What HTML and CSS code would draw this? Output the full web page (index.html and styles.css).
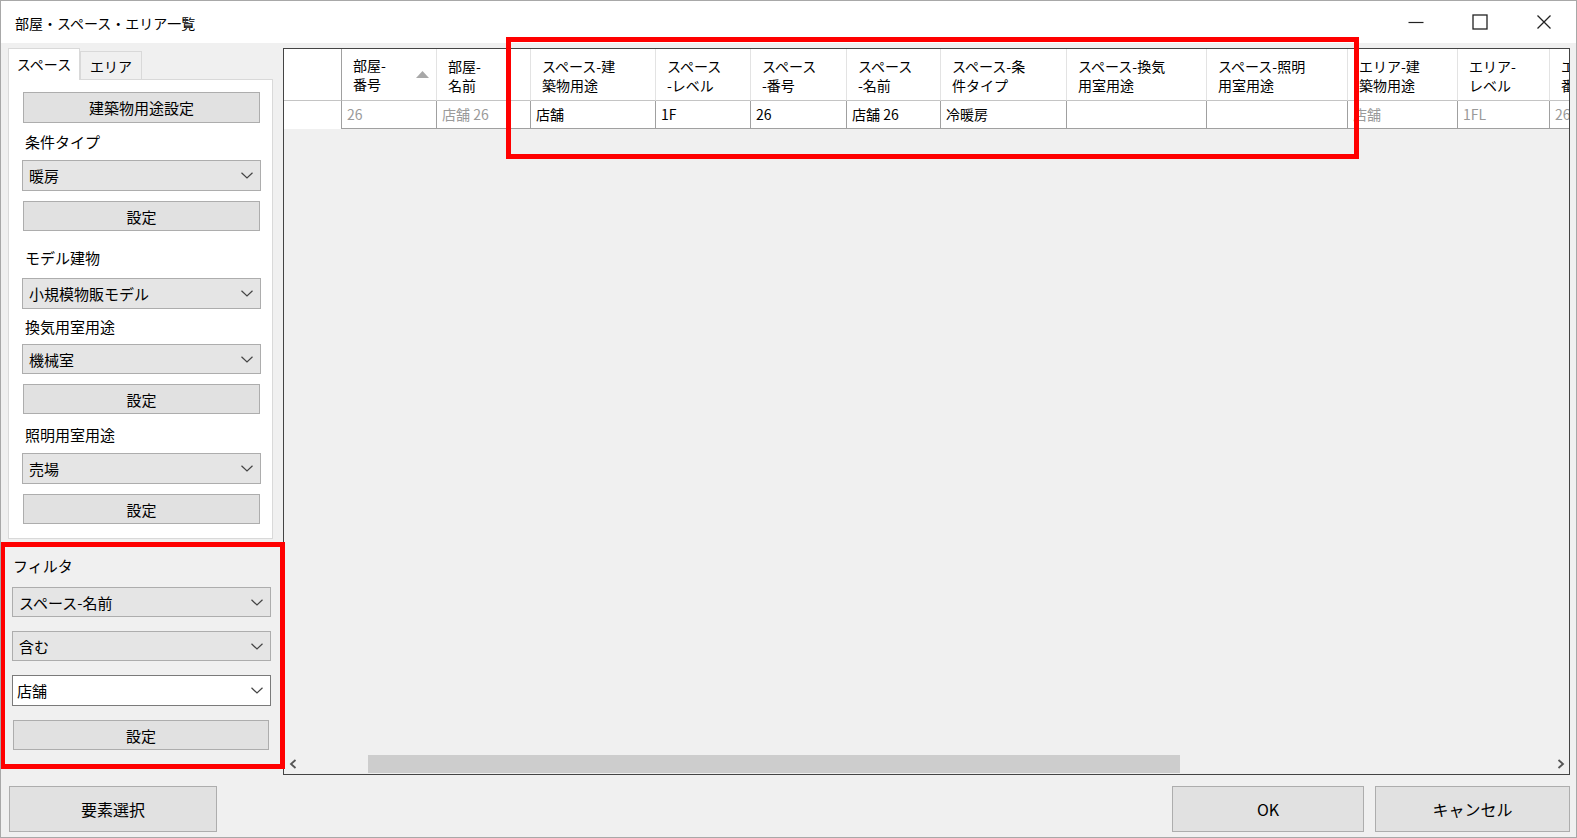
FILE: index.html
```html
<!DOCTYPE html>
<html lang="ja">
  <head>
    <meta charset="UTF-8" />
    <title>部屋・スペース・エリア一覧</title>
    <link rel="stylesheet" href="styles.css">
  </head>
  <body>
    <div class="window">
      <div class="titlebar">
        <div class="title">部屋・スペース・エリア一覧</div>
        <div class="controls">
          <div class="ctl">
            <svg width="16" height="16" viewBox="0 0 16 16"><line x1="0.5" y1="8.5" x2="15.5" y2="8.5" stroke="#222" stroke-width="1.2"/></svg>
          </div>
          <div class="ctl">
            <svg width="16" height="16" viewBox="0 0 16 16"><rect x="1" y="1" width="14" height="14" fill="none" stroke="#222" stroke-width="1.3"/></svg>
          </div>
          <div class="ctl">
            <svg width="16" height="16" viewBox="0 0 16 16"><path d="M1.5 1.5 L14.5 14.5 M14.5 1.5 L1.5 14.5" stroke="#222" stroke-width="1.3"/></svg>
          </div>
        </div>
      </div>

      <div class="content">
        <div class="left">
          <div class="tabs">
            <div class="tab-strip">
              <div class="tab active">スペース</div>
              <div class="tab">エリア</div>
            </div>
            <div class="tab-page">
              <div class="btn btn-top">建築物用途設定</div>
              <div class="label l1">条件タイプ</div>
              <div class="combo c1"><span>暖房</span><svg class="chev" width="12" height="7" viewBox="0 0 12 7"><polyline points="0.5,0.8 6,6 11.5,0.8" fill="none" stroke="#444" stroke-width="1.2"/></svg></div>
              <div class="btn b1">設定</div>
              <div class="label l2">モデル建物</div>
              <div class="combo c2"><span>小規模物販モデル</span><svg class="chev" width="12" height="7" viewBox="0 0 12 7"><polyline points="0.5,0.8 6,6 11.5,0.8" fill="none" stroke="#444" stroke-width="1.2"/></svg></div>
              <div class="label l3">換気用室用途</div>
              <div class="combo c3"><span>機械室</span><svg class="chev" width="12" height="7" viewBox="0 0 12 7"><polyline points="0.5,0.8 6,6 11.5,0.8" fill="none" stroke="#444" stroke-width="1.2"/></svg></div>
              <div class="btn b1">設定</div>
              <div class="label l4">照明用室用途</div>
              <div class="combo c4"><span>売場</span><svg class="chev" width="12" height="7" viewBox="0 0 12 7"><polyline points="0.5,0.8 6,6 11.5,0.8" fill="none" stroke="#444" stroke-width="1.2"/></svg></div>
              <div class="btn b1">設定</div>
            </div>
          </div>

          <div class="filter">
            <div class="label">フィルタ</div>
            <div class="combo f1"><span>スペース-名前</span><svg class="chev" width="12" height="7" viewBox="0 0 12 7"><polyline points="0.5,0.8 6,6 11.5,0.8" fill="none" stroke="#444" stroke-width="1.2"/></svg></div>
            <div class="combo f2"><span>含む</span><svg class="chev" width="12" height="7" viewBox="0 0 12 7"><polyline points="0.5,0.8 6,6 11.5,0.8" fill="none" stroke="#444" stroke-width="1.2"/></svg></div>
            <div class="combo f3 edit"><span>店舗</span><svg class="chev" width="12" height="7" viewBox="0 0 12 7"><polyline points="0.5,0.8 6,6 11.5,0.8" fill="none" stroke="#444" stroke-width="1.2"/></svg></div>
            <div class="btn f4">設定</div>
          </div>
        </div>

        <div class="grid">
          <div class="grid-view">
            <div class="row head">
              <div class="cell rh"></div>
              <div class="cell sorted"><span>部屋-<br>番号</span><svg width="13" height="7" viewBox="0 0 13 7"><polygon points="0,7 6.5,0 13,7" fill="#a8a8a8"/></svg></div>
              <div class="cell">部屋-<br>名前</div>
              <div class="cell">スペース-建<br>築物用途</div>
              <div class="cell">スペース<br>-レベル</div>
              <div class="cell">スペース<br>-番号</div>
              <div class="cell">スペース<br>-名前</div>
              <div class="cell">スペース-条<br>件タイプ</div>
              <div class="cell">スペース-換気<br>用室用途</div>
              <div class="cell">スペース-照明<br>用室用途</div>
              <div class="cell">エリア-建<br>築物用途</div>
              <div class="cell">エリア-<br>レベル</div>
              <div class="cell">エリア-<br>番号</div>
            </div>
            <div class="row data">
              <div class="cell rh"></div>
              <div class="cell ro">26</div>
              <div class="cell ro">店舗 26</div>
              <div class="cell">店舗</div>
              <div class="cell">1F</div>
              <div class="cell">26</div>
              <div class="cell">店舗 26</div>
              <div class="cell">冷暖房</div>
              <div class="cell"></div>
              <div class="cell"></div>
              <div class="cell ro">店舗</div>
              <div class="cell ro">1FL</div>
              <div class="cell ro">26</div>
            </div>
          </div>
          <div class="hscroll">
            <div class="arrow"><svg width="8" height="10" viewBox="0 0 8 10"><polyline points="6.5,1 2,5 6.5,9" fill="none" stroke="#555" stroke-width="1.8"/></svg></div>
            <div class="track"><div class="thumb"></div></div>
            <div class="arrow"><svg width="8" height="10" viewBox="0 0 8 10"><polyline points="1.5,1 6,5 1.5,9" fill="none" stroke="#555" stroke-width="1.8"/></svg></div>
          </div>
        </div>
      </div>

      <div class="footer">
        <div class="btn big select">要素選択</div>
        <div class="right-btns">
          <div class="btn big ok">OK</div>
          <div class="btn big cancel">キャンセル</div>
        </div>
      </div>

      <div class="mark mark-grid"></div>
      <div class="mark mark-filter"></div>
    </div>
  </body>
</html>
```

FILE: styles.css
```css
* {
  margin: 0;
  padding: 0;
  box-sizing: border-box;
}
body {
  font-family: "Noto Sans CJK JP", "Noto Sans", sans-serif;
  background-color: #f0f0f0;
  color: #000;
  overflow: hidden;
}
.window {
  position: relative;
  width: 1577px;
  height: 838px;
  border: 1px solid #a8a8a8;
  background-color: #f0f0f0;
  display: flex;
  flex-direction: column;
  overflow: hidden;
}
.titlebar {
  height: 42px;
  background-color: #fff;
  display: flex;
  align-items: center;
  justify-content: space-between;
  flex: none;
}
.title {
  font-size: 14px;
  padding-left: 14px;
  padding-top: 1px;
}
.controls {
  display: flex;
  height: 100%;
}
.ctl {
  width: 64px;
  height: 100%;
  display: flex;
  align-items: center;
  justify-content: center;
}

.content {
  display: flex;
  padding-top: 5px;
  height: 732px;
  flex: none;
}
.left {
  width: 282px;
  flex: none;
}
.tabs {
  margin-left: 7px;
  width: 265px;
}
.tab-strip {
  display: flex;
  align-items: flex-end;
  height: 31px;
}
.tab {
  height: 28px;
  width: 62px;
  border: 1px solid #d9d9d9;
  border-bottom: none;
  background-color: #f0f0f0;
  font-size: 14px;
  display: flex;
  align-items: center;
  justify-content: center;
  padding-top: 1px;
}
.tab.active {
  height: 32px;
  width: 72px;
  margin-bottom: -1px;
  background-color: #fff;
  position: relative;
  z-index: 1;
  padding-bottom: 3px;
}
.tab-page {
  height: 460px;
  border: 1px solid #d9d9d9;
  background-color: #fff;
  padding: 0 11px 0 13px;
}
.label {
  font-size: 15px;
  height: 22px;
  line-height: 22px;
  padding-left: 3px;
}
.btn {
  background-color: #e1e1e1;
  border: 1px solid #adadad;
  display: flex;
  align-items: center;
  justify-content: center;
  font-size: 15px;
}
.combo {
  background-color: #e5e5e5;
  border: 1px solid #adadad;
  height: 31px;
  display: flex;
  align-items: center;
  justify-content: space-between;
  padding: 0 7px 0 6px;
  font-size: 15px;
}
.combo.edit {
  background-color: #fff;
  border-color: #7a7a7a;
  padding-left: 4px;
}
.btn-top {
  margin: 12px 1px 0 1px;
  height: 31px;
}
.b1 {
  margin: 10px 1px 0 1px;
  height: 30px;
}
.l1 { margin-top: 8px; }
.c1 { margin-top: 7px; }
.l2 { margin-top: 16px; }
.c2 { margin-top: 9px; }
.l3 { margin-top: 7px; }
.c3 { margin-top: 6px; height: 30px; }
.l4 { margin-top: 10px; }
.c4 { margin-top: 7px; }

.filter {
  padding: 16px 0 0 11px;
}
.filter .label {
  padding-left: 1px;
}
.filter .combo {
  width: 259px;
  height: 30px;
}
.f1 { margin-top: 10px; }
.f2 { margin-top: 14px; }
.f3 { margin-top: 14px; height: 31px !important; }
.f4 {
  margin: 14px 0 0 1px;
  width: 256px;
  height: 30px;
}

.grid {
  flex: 1;
  min-width: 0;
  margin-right: 6px;
  height: 727px;
  border: 1px solid #444;
  display: flex;
  flex-direction: column;
  background-color: #f0f0f0;
}
.grid-view {
  flex: 1;
  min-height: 0;
  overflow: hidden;
}
.row {
  display: grid;
  grid-template-columns: 58px 95px 94px 125px 95px 96px 94px 126px 140px 141px 110px 92px 100px;
  font-size: 14px;
  background-color: #fff;
  width: max-content;
}
.head {
  height: 52px;
}
.head .cell {
  border-right: 1px solid #e3e3e3;
  border-bottom: 1px solid #c4c4c4;
  padding: 8px 4px 0 11px;
  line-height: 19px;
  white-space: nowrap;
  overflow: hidden;
}
.head .cell.rh {
  border-right-color: #a0a0a0;
}
.head .sorted {
  display: flex;
  justify-content: space-between;
  align-items: center;
  padding-top: 0;
  padding-right: 7px;
}
.head .sorted span {
  padding-top: 1px;
}
.data {
  height: 28px;
}
.data .cell {
  border-right: 1px solid #a0a0a0;
  border-bottom: 1px solid #a0a0a0;
  padding-left: 5px;
  line-height: 27px;
  white-space: nowrap;
  overflow: hidden;
}
.data .cell.rh {
  border-bottom: none;
}
.data .ro {
  color: #9a9a9a;
}

.hscroll {
  height: 20px;
  display: flex;
  flex: none;
  background-color: #f0f0f0;
}
.arrow {
  width: 17px;
  flex: none;
  display: flex;
  align-items: center;
  justify-content: center;
}
.track {
  flex: 1;
  min-width: 0;
  padding: 1px 0 1px 67px;
}
.thumb {
  width: 812px;
  height: 100%;
  background-color: #cdcdcd;
}

.footer {
  display: flex;
  justify-content: space-between;
  padding: 11px 6px 0 8px;
}
.big {
  height: 46px;
  font-size: 16px;
}
.select {
  width: 208px;
}
.right-btns {
  display: flex;
  gap: 11px;
}
.ok {
  width: 192px;
}
.cancel {
  width: 195px;
}

/* red highlight frames drawn over the screenshot */
.mark {
  position: absolute;
  border: 5px solid #ff0000;
  pointer-events: none;
}
.mark-grid {
  left: 505px;
  top: 36px;
  width: 853px;
  height: 122px;
}
.mark-filter {
  left: -1px;
  top: 541px;
  width: 285px;
  height: 227px;
}
```
